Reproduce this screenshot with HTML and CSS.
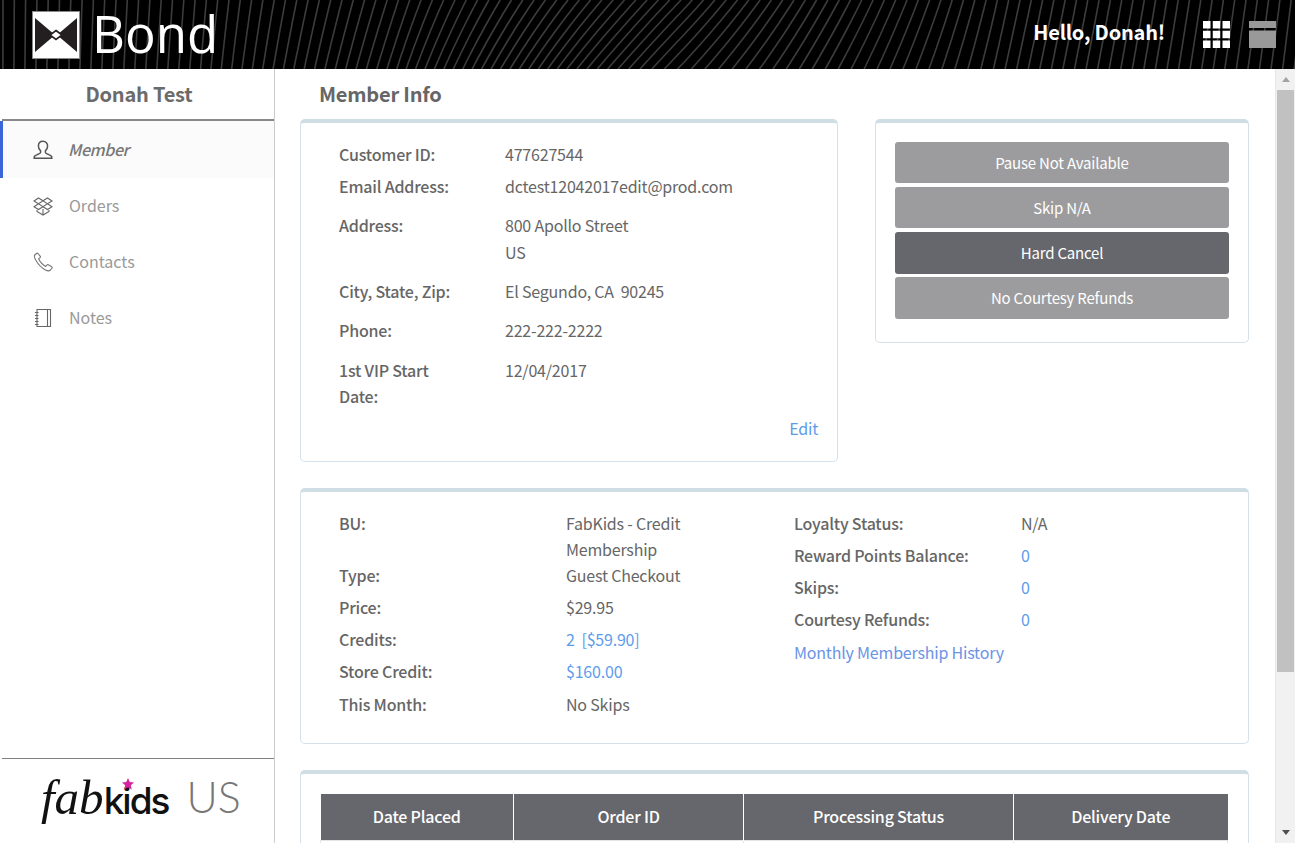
FILE: index.html
```html
<!DOCTYPE html>
<html lang="en">
<head>
<meta charset="utf-8">
<title>Bond</title>
<link rel="stylesheet" href="styles.css">
</head>
<body>
<header class="topbar">
  <svg id="stripes" class="stripes" width="1295" height="69" aria-hidden="true"></svg>
  <div class="brand">
    <svg class="brand-mark" width="48" height="48" viewBox="0 0 48 48">
      <rect x="0.5" y="0.5" width="47" height="47" fill="#fff" stroke="#8a8a8a"/>
      <path d="M3 7 L23 24 L3 41 Z M45 7 L25 24 L45 41 Z" fill="#231f20"/>
      <path d="M24 19.5 L30 24 L24 28.5 L18 24 Z" fill="#fff" stroke="#231f20" stroke-width="1.6"/>
    </svg>
    <span class="brand-name">Bond</span>
  </div>
  <div class="top-actions">
    <span class="hello">Hello, Donah!</span>
    <svg class="grid-icon" width="27" height="27" viewBox="0 0 27 27" fill="#fff">
      <rect width="7.5" height="7.5"/><rect x="9.75" width="7.5" height="7.5"/><rect x="19.5" width="7.5" height="7.5"/>
      <rect y="9.75" width="7.5" height="7.5"/><rect x="9.75" y="9.75" width="7.5" height="7.5"/><rect x="19.5" y="9.75" width="7.5" height="7.5"/>
      <rect y="19.5" width="7.5" height="7.5"/><rect x="9.75" y="19.5" width="7.5" height="7.5"/><rect x="19.5" y="19.5" width="7.5" height="7.5"/>
    </svg>
    <svg class="win-icon" width="27" height="27" viewBox="0 0 27 27" fill="#999">
      <rect width="27" height="7"/><rect y="9.5" width="27" height="17.5"/>
    </svg>
  </div>
</header>

<div class="shell">
  <aside class="sidebar">
    <div class="user-name">Donah Test</div>
    <nav class="nav">
      <a class="nav-item active">
        <svg class="nav-icon" width="20" height="20" viewBox="0 0 20 20" fill="none" stroke="#555" stroke-width="1.5"><path d="M10 1.2c-3 0-4.6 2.2-4.6 4.9 0 2 .9 3.7 2.2 4.8v1.5c0 .9-1.4 1.4-3.4 2.2-1.9.7-3 1.3-3 2.6v1h17.6v-1c0-1.3-1.1-1.9-3-2.6-2-.8-3.4-1.3-3.4-2.2v-1.5c1.3-1.1 2.2-2.8 2.2-4.8 0-2.7-1.6-4.9-4.600-4.900z"/></svg>
        <span>Member</span>
      </a>
      <a class="nav-item">
        <svg class="nav-icon" width="20" height="20" viewBox="0 0 20 20" fill="none" stroke="#666" stroke-width="1.100"><path d="M5.500 2 L10 4.800 L14.500 2 L19 5 L14.500 7.800 L19 10.700 L14.500 13.500 L10 10.700 L5.500 13.500 L1 10.700 L5.500 7.800 L1 5 Z M5.500 7.800 L10 4.800 L14.500 7.800 L10 10.700 Z M4 14 V15.500 L10 19 L16 15.500 V14 M10 13 V19"/></svg>
        <span>Orders</span>
      </a>
      <a class="nav-item">
        <svg class="nav-icon" width="20" height="20" viewBox="0 0 20 20" fill="none" stroke="#777" stroke-width="1.1"><path d="M3.500 1.500 L1.800 3 C.8 4 1.500 6 3 8.500 C5 12 8.500 15.800 12.500 18 C14.800 19.200 16.500 19 17.500 18 L19 16 C19.300 15.500 19.200 15 18.700 14.700 L15.300 12.700 C14.800 12.400 14.300 12.500 14 12.900 L12.800 14.400 C10 13 6.800 9.500 5.600 6.800 L7.100 5.600 C7.500 5.300 7.600 4.800 7.300 4.300 L5 1.500 C4.600 1.100 4 1.100 3.500 1.500 Z"/></svg>
        <span>Contacts</span>
      </a>
      <a class="nav-item">
        <svg class="nav-icon" width="20" height="20" viewBox="0 0 20 20" fill="none" stroke="#666" stroke-width="1.1"><path d="M4 1.500 H17.500 V18.500 H4 Z M14.500 1.500 V18.500 M2 4.500 H5.500 M2 7.500 H5.500 M2 10.500 H5.500 M2 13.500 H5.500 M2 16.500 H5.500"/></svg>
        <span>Notes</span>
      </a>
    </nav>
    <div class="sidebar-foot">
      <div class="fk-logo">
        <span class="fk-fab">fab</span><span class="fk-kids">kids</span>
        <svg class="fk-star" width="12" height="12" viewBox="0 0 20 20" fill="#d6249f"><path d="M10 0 L12.900 6.500 L20 7.300 L14.700 12 L16.200 19 L10 15.400 L3.800 19 L5.300 12 L0 7.300 L7.100 6.500 Z"/></svg>
      </div>
      <span class="fk-region">US</span>
    </div>
  </aside>

  <main class="main">
    <h1 class="page-title">Member Info</h1>
    <div class="top-cards">
      <section class="card card-info">
        <div class="kv tight"><div class="k">Customer ID:</div><div class="v">477627544</div></div>
        <div class="kv"><div class="k">Email Address:</div><div class="v">dctest12042017edit@prod.com</div></div>
        <div class="kv addr"><div class="k">Address:</div><div class="v">800 Apollo Street<br>US</div></div>
        <div class="kv"><div class="k">City, State, Zip:</div><div class="v">El Segundo, CA&nbsp; 90245</div></div>
        <div class="kv wide"><div class="k">Phone:</div><div class="v">222-222-2222</div></div>
        <div class="kv"><div class="k narrow">1st VIP Start Date:</div><div class="v">12/04/2017</div></div>
        <div class="edit-row"><a class="link">Edit</a></div>
      </section>
      <section class="card card-actions">
        <button class="btn">Pause Not Available</button>
        <button class="btn">Skip N/A</button>
        <button class="btn btn-dark">Hard Cancel</button>
        <button class="btn">No Courtesy Refunds</button>
      </section>
    </div>

    <section class="card card-member">
      <div class="col col-left">
        <div class="m-row flush"><div class="k">BU:</div><div class="v">FabKids - Credit Membership</div></div>
        <div class="m-row"><div class="k">Type:</div><div class="v">Guest Checkout</div></div>
        <div class="m-row"><div class="k">Price:</div><div class="v">$29.95</div></div>
        <div class="m-row"><div class="k">Credits:</div><div class="v link">2&nbsp; [$59.90]</div></div>
        <div class="m-row loose"><div class="k">Store Credit:</div><div class="v link">$160.00</div></div>
        <div class="m-row"><div class="k">This Month:</div><div class="v">No Skips</div></div>
      </div>
      <div class="col col-right">
        <div class="m-row"><div class="k">Loyalty Status:</div><div class="v">N/A</div></div>
        <div class="m-row"><div class="k">Reward Points Balance:</div><div class="v link">0</div></div>
        <div class="m-row"><div class="k">Skips:</div><div class="v link">0</div></div>
        <div class="m-row loose"><div class="k">Courtesy Refunds:</div><div class="v link">0</div></div>
        <a class="link history">Monthly Membership History</a>
      </div>
    </section>

    <section class="card card-orders">
      <table class="orders">
        <thead>
          <tr><th class="c1">Date Placed</th><th class="c2">Order ID</th><th class="c3">Processing Status</th><th class="c4">Delivery Date</th></tr>
        </thead>
        <tbody>
          <tr><td></td><td></td><td></td><td></td></tr>
        </tbody>
      </table>
    </section>
  </main>

  <div class="scrollbar" aria-hidden="true">
    <span class="arrow arrow-up"></span>
    <span class="thumb"></span>
    <span class="arrow arrow-down"></span>
  </div>
</div>
<script src="stripes.js"></script>
</body>
</html>
```

FILE: styles.css
```css
* { box-sizing: border-box; }
html, body { margin: 0; height: 100%; overflow: hidden; }
body {
  display: flex;
  flex-direction: column;
  background: #fff;
  color: #666;
  font-family: "Noto Sans CJK SC", "Source Sans Pro", "Noto Sans", sans-serif;
  font-size: 16px;
  letter-spacing: -0.2px;
  line-height: 26px;
}

/* top bar */
.topbar {
  position: relative;
  flex: 0 0 69px;
  display: flex;
  align-items: center;
  justify-content: space-between;
  background: #000;
}
.stripes { position: absolute; left: 0; top: 0; }
.brand { position: relative; display: flex; align-items: center; margin-left: 32px; }
.brand-mark { display: block; margin-top: 1px; }
.brand-name {
  margin-left: 12px;
  font-family: "Open Sans", sans-serif;
  font-size: 51px;
  letter-spacing: 0;
  line-height: 67px;
  margin-bottom: 2px;
  color: #fff;
}
.top-actions { position: relative; display: flex; align-items: center; margin-right: 19px; }
.hello { font-size: 20px; font-weight: 700; letter-spacing: -0.2px; line-height: 26px; margin-bottom: 6px; color: #fff; margin-right: 38px; }
.grid-icon { display: block; margin-right: 19px; }
.win-icon { display: block; }

/* shell */
.shell { flex: 1; display: flex; min-height: 0; }

/* sidebar */
.sidebar {
  flex: 0 0 275px;
  display: flex;
  flex-direction: column;
  border-right: 1px solid #ccc;
}
.user-name {
  height: 52px;
  margin-left: 2px;
  padding-left: 2px;
  border-bottom: 2px solid #888;
  text-align: center;
  font-size: 20px;
  font-weight: 700;
  letter-spacing: -0.2px;
  line-height: 50px;
  color: #6b6b6b;
}
.nav { display: flex; flex-direction: column; }
.nav-item {
  display: flex;
  align-items: center;
  gap: 16px;
  height: 56px;
  padding-left: 33px;
  font-size: 16px;
  letter-spacing: 0;
  color: #999;
}
.nav-item span { margin-top: -2px; }
.nav-item.active {
  height: 57px;
  padding-left: 30px;
  gap: 15px;
  border-left: 3px solid #3b66d9;
  background: #fbfbfb;
  color: #777;
  font-style: italic;
  font-weight: 500;
  letter-spacing: -0.4px;
}
.nav-icon { display: block; flex: none; }
.sidebar-foot {
  margin-top: auto;
  margin-left: 2px;
  height: 85px;
  border-top: 1px solid #808080;
  display: flex;
  align-items: flex-start;
  padding: 17px 0 0 39px;
  letter-spacing: 0;
}
.fk-logo { position: relative; display: flex; align-items: baseline; color: #111; line-height: 44px; }
.fk-fab { font-family: "Liberation Serif", serif; font-style: italic; font-size: 49px; letter-spacing: 0; }
.fk-kids { font-family: "Inter", sans-serif; font-size: 37px; font-weight: 500; letter-spacing: -2px; }
.fk-star { position: absolute; left: 81px; top: 2px; }
.fk-region {
  margin-left: 18px;
  margin-top: -1px;
  font-family: "Lato", sans-serif;
  font-weight: 300;
  font-size: 43px;
  line-height: 43px;
  color: #777;
}

/* main column */
.main { flex: 1; min-width: 0; padding: 0 26px 0 25px; overflow: hidden; }
.page-title {
  margin: 0 0 0 19px;
  height: 50px;
  font-size: 20px;
  font-weight: 700;
  line-height: 50px;
  color: #666;
}
.card {
  border: 1px solid #d5e1ea;
  border-top: 4px solid #cfdde4;
  border-radius: 5px;
  background: #fff;
}
.top-cards { display: flex; align-items: flex-start; gap: 37px; margin-bottom: 26px; }
.card-info { flex: 0 0 538px; height: 343px; padding: 18px 19px 0 38px; }
.card-actions {
  flex: 0 0 374px;
  height: 224px;
  padding: 19px 19px 0;
  display: flex;
  flex-direction: column;
  gap: 4px;
}
.kv { display: grid; grid-template-columns: 166px 1fr; margin-bottom: 13px; }
.kv.tight { margin-bottom: 6px; }
.kv.addr { line-height: 27px; margin-bottom: 12px; }
.kv.wide { margin-bottom: 14px; }
.k { font-weight: 500; color: #666; }
.k.narrow { width: 120px; }
.link { color: #5d9ceb; }
.edit-row { text-align: right; margin-top: -7px; }

.btn {
  flex: none;
  height: 41px;
  border: 0;
  border-radius: 3px;
  padding: 0;
  background: #9c9c9e;
  color: #fff;
  font: inherit;
  font-size: 15px;
  letter-spacing: -0.2px;
  line-height: 40px;
}
.btn:last-child { height: 42px; }
.btn-dark { height: 42px; margin-bottom: -1px; background: #66676c; }

.card-member {
  display: flex;
  height: 256px;
  margin-bottom: 26px;
  padding: 18px 0 0 38px;
}
.col { display: flex; flex-direction: column; }
.col-left { width: 455px; }
.col-right { flex: 1; }
.m-row { display: grid; grid-template-columns: 227px 155px; margin-bottom: 6px; }
.m-row.flush { margin-bottom: 0; }
.m-row.loose { margin-bottom: 7px; }
.history { color: #6a93e6; }

.card-orders { padding: 20px 20px 20px; }
.orders { width: 907px; margin-left: -1px; border-collapse: collapse; table-layout: fixed; }
.orders th {
  height: 46px;
  padding: 0 0 2px;
  background: #66676c;
  color: #fff;
  font-size: 16px;
  font-weight: 500;
  border-left: 1px solid #fff;
}
.orders th:first-child { border-left: 0; }
.orders td { height: 40px; border: 1px solid #e5e5e5; }
.c1 { width: 193px; }
.c2 { width: 230px; }
.c3 { width: 270px; }
.c4 { width: 214px; }

/* scrollbar */
.scrollbar {
  flex: 0 0 20px;
  display: flex;
  flex-direction: column;
  align-items: center;
  background: #f1f1f1;
  border-left: 1px solid #e6e6e6;
}
.arrow { flex: none; width: 0; height: 0; border-left: 4px solid transparent; border-right: 4px solid transparent; }
.arrow-up { margin-top: 8px; border-bottom: 5px solid #a3a3a3; }
.thumb { flex: none; width: 17px; height: 582px; margin-top: 8px; background: #c1c1c1; }
.arrow-down { margin-top: auto; margin-bottom: 8px; border-top: 5px solid #505050; }
```

FILE: stripes.js
```js
// Header texture: fine lines that follow a curved flow field across the bar.
(function () {
  var svg = document.getElementById('stripes');
  var NS = 'http://www.w3.org/2000/svg';
  var knots = [[0, 0], [200, 0.08], [400, 0.33], [600, 0.85], [680, 0.95], [800, 0.62], [1000, 0.22], [1300, 0.12], [1500, 0.1]];
  function slope(x) {
    if (x <= 0) return 0;
    for (var k = 1; k < knots.length; k++) {
      if (x <= knots[k][0]) {
        var a = knots[k - 1], b = knots[k];
        return a[1] + (b[1] - a[1]) * (x - a[0]) / (b[0] - a[0]);
      }
    }
    return 0.1;
  }
  for (var x0 = 3; x0 < 1400; x0 += 11.3) {
    var x = x0, d = 'M' + x.toFixed(1) + ' 0';
    for (var y = 3; y <= 69; y += 3) {
      x -= slope(x) * 3;
      d += 'L' + x.toFixed(1) + ' ' + y;
    }
    var p = document.createElementNS(NS, 'path');
    p.setAttribute('d', d);
    p.setAttribute('fill', 'none');
    p.setAttribute('stroke', '#3c3c3c');
    p.setAttribute('stroke-width', '1.6');
    svg.appendChild(p);
  }
})();
```
